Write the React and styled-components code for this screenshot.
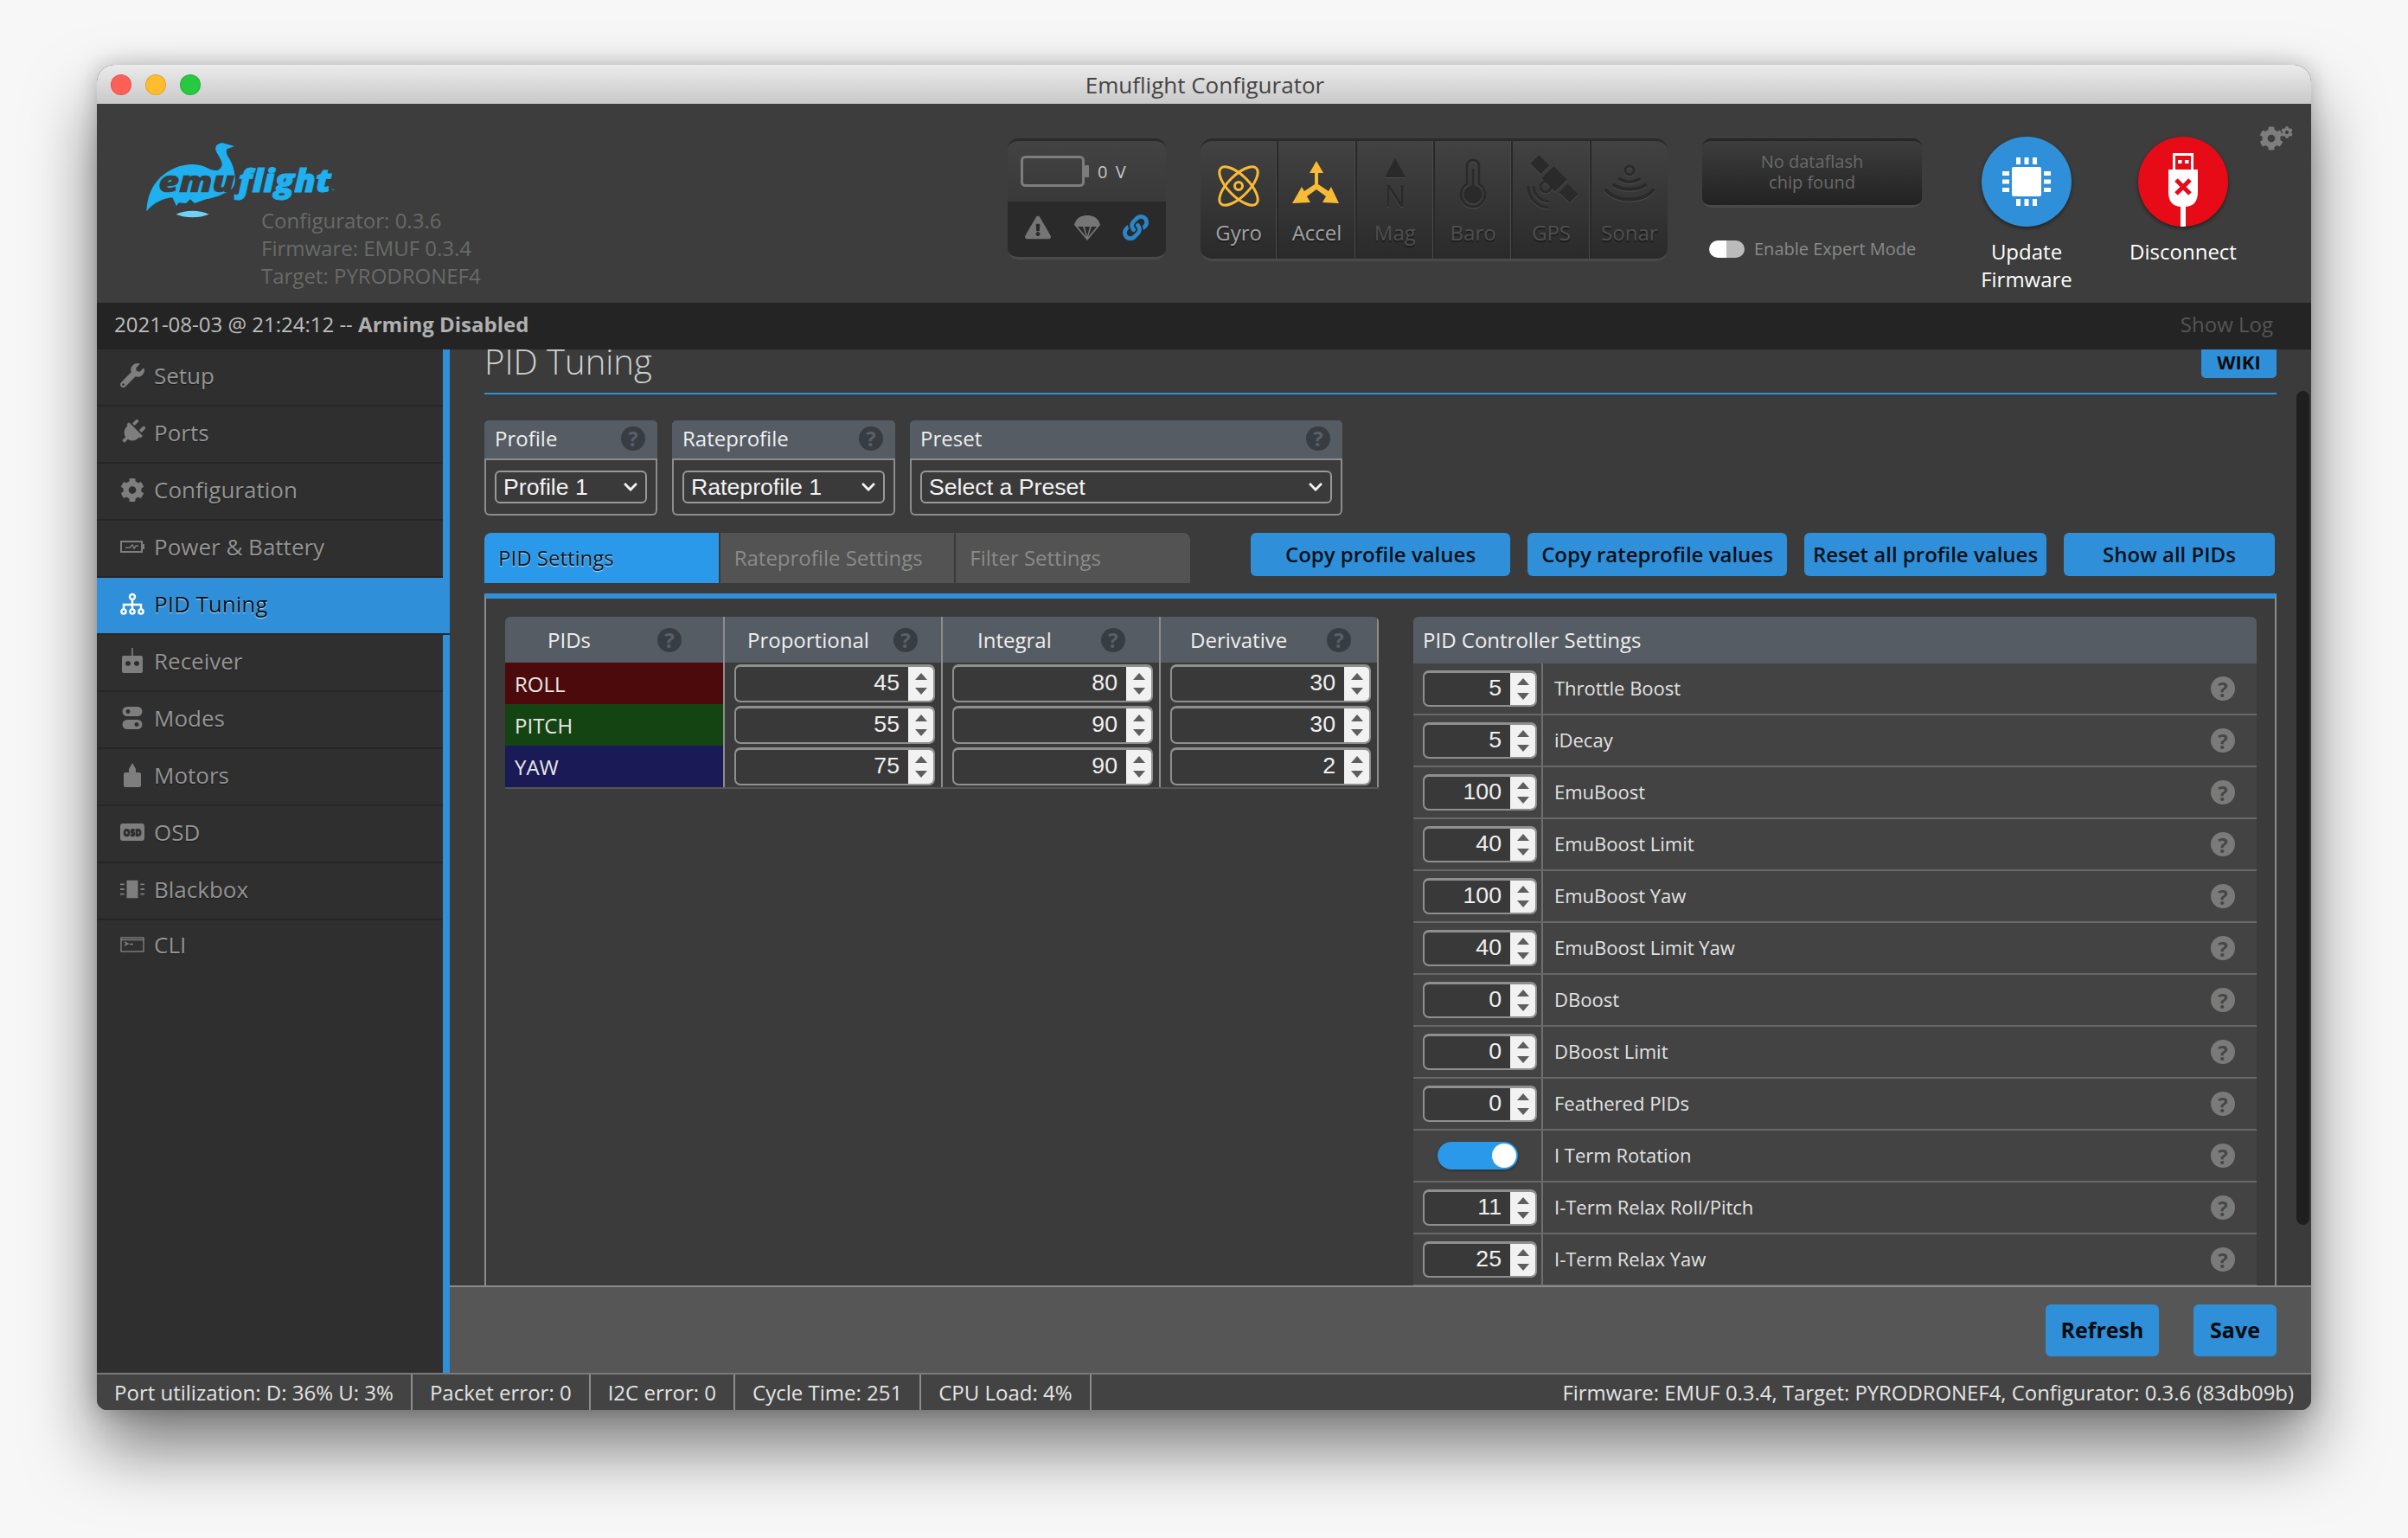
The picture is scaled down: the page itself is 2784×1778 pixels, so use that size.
import React from "react";
import styled, { createGlobalStyle } from "styled-components";
import { FaWrench, FaPlug, FaCog, FaLink, FaExclamationTriangle, FaChevronDown } from "react-icons/fa";

const GlobalStyle = createGlobalStyle`
  html, body {
    margin: 0;
    width: 2784px;
    height: 1778px;
    overflow: hidden;
    background: #f7f7f7;
    font-family: "Open Sans", sans-serif;
  }
  * { box-sizing: border-box; }
`;

const Page = styled.div`
  padding: 75px 112px 0;
`;

const Window = styled.div`
  width: 2560px;
  height: 1555px;
  display: flex;
  flex-direction: column;
  border-radius: 20px 20px 12px 12px;
  overflow: hidden;
  background: #3a3b3a;
  box-shadow: 0 44px 80px rgba(0, 0, 0, 0.5), 0 0 26px rgba(0, 0, 0, 0.22);
`;

const TitleBar = styled.div`
  height: 45px;
  flex: none;
  display: flex;
  align-items: center;
  padding-left: 16px;
  gap: 16px;
  background: linear-gradient(#ebebeb, #c9c9c9);
`;

const Light = styled.span`
  width: 24px;
  height: 24px;
  border-radius: 50%;
  background: ${(p) => p.$color};
  border: 1px solid rgba(0, 0, 0, 0.12);
`;

const Title = styled.div`
  flex: 1;
  text-align: center;
  padding-right: 134px;
  font-size: 26px;
  color: #454545;
`;

const Header = styled.header`
  height: 230px;
  flex: none;
  display: flex;
  align-items: flex-start;
  padding: 35px 0 0 48px;
  background: #3c3d3c;
`;

const Brand = styled.div`
  width: 1005px;
`;

const VersionList = styled.div`
  margin: -26px 0 0 142px;
  font-size: 24px;
  line-height: 32px;
  color: #696a69;
`;

const BatteryBox = styled.div`
  width: 183px;
  height: 140px;
  margin-top: 5px;
  border-radius: 12px;
  border-top: 3px solid #2a2a2a;
  border-bottom: 3px solid #4a4a4a;
  overflow: hidden;
  background: #2a2a2a;
`;

const BatteryTop = styled.div`
  height: 70px;
  display: flex;
  align-items: center;
  gap: 9px;
  padding-left: 15px;
  background: linear-gradient(#424342, #383938);
  font-size: 20px;
  letter-spacing: 2px;
  color: #c8c8c8;
`;

const BatteryBottom = styled.div`
  height: 64px;
  display: flex;
  align-items: center;
  justify-content: space-between;
  padding: 0 20px 4px 20px;
  color: #757575;
  font-size: 30px;
`;

const SensorBar = styled.div`
  display: flex;
  width: 540px;
  height: 142px;
  margin: 5px 0 0 40px;
  border-radius: 14px;
  border-top: 3px solid #2a2a2a;
  border-bottom: 3px solid #4a4a4a;
  overflow: hidden;
  background: linear-gradient(#414241, #2a2a2a);
`;

const SensorCell = styled.div`
  flex: 1;
  display: flex;
  flex-direction: column;
  align-items: center;
  padding-top: 20px;
  border-right: 2px solid #282828;
  box-shadow: inset -1px 0 0 #4a4a4a;
  &:last-child { border-right: 0; box-shadow: none; }
`;

const SensorIcon = styled.svg`
  width: 60px;
  height: 60px;
  flex: none;
  overflow: visible;
  color: ${(p) => (p.$on ? "#f9bb35" : "#2a2a2a")};
  filter: ${(p) => (p.$on ? "none" : "drop-shadow(0 1px 0 #4e4e4e)")};
`;

const SensorLabel = styled.div`
  margin-top: 10px;
  font-size: 24px;
  line-height: 32px;
  color: ${(p) => (p.$on ? "#a2a2a2" : "#4f4f4f")};
  text-shadow: 0 2px 1px #1c1c1c;
`;

const FlashColumn = styled.div`
  width: 254px;
  margin: 5px 0 0 40px;
`;

const FlashBox = styled.div`
  height: 80px;
  display: flex;
  align-items: center;
  justify-content: center;
  text-align: center;
  padding-bottom: 2px;
  border-radius: 10px;
  border-top: 3px solid #262626;
  border-bottom: 3px solid #4a4a4a;
  background: linear-gradient(#3c3d3c, #222);
  font-size: 20px;
  line-height: 24px;
  color: #6a6a6a;
`;

const ExpertRow = styled.div`
  display: flex;
  align-items: center;
  gap: 11px;
  margin: 34px 0 0 8px;
  font-size: 20px;
  white-space: nowrap;
  color: #8a8a8a;
`;

const ExpertSwitch = styled.span`
  width: 41px;
  height: 20px;
  display: block;
  border-radius: 10px;
  background: linear-gradient(90deg, #fff 0 20px, #bbb 20px);
`;

const ActionColumn = styled.div`
  width: 180px;
  margin: 3px 0 0 ${(p) => p.$gap}px;
  display: flex;
  flex-direction: column;
  align-items: center;
  text-align: center;
  font-size: 24px;
  line-height: 32px;
  color: #fff;
`;

const ActionCircle = styled.div`
  width: 104px;
  height: 104px;
  margin-bottom: 13px;
  border-radius: 50%;
  background: ${(p) => p.$color};
  box-shadow: 0 2px 4px rgba(0, 0, 0, 0.45);
  display: flex;
  align-items: center;
  justify-content: center;
  overflow: hidden;
  svg { display: block; }
`;

const SettingsGears = styled.div`
  display: flex;
  align-items: flex-start;
  margin: -9px 0 0 -2px;
  color: #7d7d7d;
`;

const SmallGear = styled(FaCog)`
  margin-left: -3px;
`;

const LogBar = styled.div`
  height: 54px;
  flex: none;
  display: flex;
  align-items: center;
  justify-content: space-between;
  padding: 0 44px 5px 20px;
  background: #242424;
  font-size: 24px;
  color: #bdbdbd;
  b { font-weight: 700; color: #b0b0b0; }
`;

const ShowLog = styled.span`
  color: #555;
`;

const Body = styled.div`
  flex: 1;
  min-height: 0;
  display: flex;
`;

const Sidebar = styled.nav`
  width: 408px;
  flex: none;
  border-right: 8px solid #2f90d9;
  background: #2f2f2f;
`;

const NavItem = styled.div`
  height: ${(p) => (p.$last ? "60px" : "66px")};
  margin-right: ${(p) => (p.$active ? "-8px" : "0")};
  display: flex;
  align-items: center;
  gap: 11px;
  padding: 0 0 ${(p) => (p.$last ? "2px" : "4px")} 27px;
  border-bottom: 2px solid ${(p) => (p.$active ? "#2a2a2a" : p.$last ? "transparent" : "#262626")};
  background: ${(p) => (p.$active ? "#2f90d9" : "transparent")};
  font-size: 26px;
  color: ${(p) => (p.$active ? "#0b1018" : "#949494")};
  text-shadow: ${(p) => (p.$active ? "0 1px 1px #bfe0f8" : "0 1px 1px #1a1a1a")};
`;

const NavIcon = styled.span`
  width: 28px;
  height: 28px;
  display: flex;
  align-items: center;
  justify-content: center;
  color: ${(p) => (p.$active ? "#fff" : "#7e7e7e")};
`;

const Main = styled.main`
  flex: 1;
  min-width: 0;
  display: flex;
  flex-direction: column;
  position: relative;
`;

const Scroller = styled.div`
  flex: 1;
  min-height: 0;
  overflow: hidden;
  padding: 0 40px;
`;

const ScrollThumb = styled.div`
  position: absolute;
  top: 48px;
  right: 2px;
  width: 15px;
  height: 964px;
  border-radius: 8px;
  background: #1f1f1f;
`;

const PageHead = styled.div`
  height: 52px;
  display: flex;
  justify-content: space-between;
  overflow: hidden;
  border-bottom: 2px solid #2f90d9;
`;

const PageTitle = styled.h1`
  margin: -17px 0 0;
  font-size: 40px;
  font-weight: 300;
  line-height: 62px;
  color: #d0d0d0;
`;

const WikiButton = styled.div`
  width: 87px;
  height: 33px;
  border-radius: 0 0 5px 5px;
  background: #2f90d9;
  text-align: center;
  font-size: 22px;
  font-weight: 700;
  line-height: 28px;
  color: #0a0a0a;
`;

const SelectRow = styled.div`
  display: flex;
  gap: 17px;
  margin-top: 30px;
`;

const SelectBox = styled.div`
  width: ${(p) => p.$width}px;
  height: 110px;
  border: 2px solid #8c8c8c;
  border-top: 0;
  border-radius: 6px;
`;

const SelectHead = styled.div`
  height: 46px;
  margin: 0 -2px;
  display: flex;
  align-items: center;
  justify-content: space-between;
  padding: 0 14px 3px 12px;
  border-bottom: 2px solid #8c8c8c;
  border-radius: 6px 6px 0 0;
  background: #555c64;
  font-size: 24px;
  color: #eee;
`;

const Help = styled.span`
  width: 28px;
  height: 28px;
  flex: none;
  display: flex;
  align-items: center;
  justify-content: center;
  border-radius: 50%;
  background: ${(p) => (p.$dark ? "#383d44" : "#7a7a7a")};
  font-size: 24px;
  font-weight: 700;
  color: ${(p) => (p.$dark ? "#59606a" : "#464746")};
`;

const SelectField = styled.div`
  height: 38px;
  margin: 12px 10px 0;
  display: flex;
  align-items: center;
  justify-content: space-between;
  padding: 0 8px 0 8px;
  border: 2px solid #999;
  border-radius: 6px;
  background: #3a3a3a;
  font-family: "Liberation Sans", Arial, sans-serif;
  font-size: 26.67px;
  color: #f2f2f2;
`;

const TabRow = styled.div`
  display: flex;
  align-items: flex-start;
  margin-top: 20px;
`;

const Tabs = styled.div`
  display: flex;
  gap: 2px;
  width: 816px;
  height: 58px;
  margin-right: 70px;
`;

const Tab = styled.div`
  flex: 1;
  display: flex;
  align-items: center;
  padding: 0 0 2px 16px;
  background: ${(p) => (p.$active ? "#2b99ea" : "#525352")};
  font-size: 24px;
  color: ${(p) => (p.$active ? "#10161d" : "#8a8b8a")};
  text-shadow: ${(p) => (p.$active ? "0 1px 1px #bfe0f8" : "none")};
  &:first-child { border-radius: 8px 0 0 0; }
  &:last-child { border-radius: 0 8px 0 0; }
`;

const ActionButtons = styled.div`
  flex: 1;
  display: flex;
  gap: 20px;
`;

const ActionButton = styled.div`
  width: ${(p) => p.$width}px;
  height: 50px;
  display: flex;
  align-items: center;
  justify-content: center;
  padding-bottom: 2px;
  border-radius: 6px;
  background: #2f90d9;
  font-size: 24px;
  font-weight: 600;
  white-space: nowrap;
  color: #071019;
`;

const Panel = styled.section`
  margin-top: 12px;
  display: flex;
  gap: 40px;
  padding: 21px 22px 0 22px;
  border-top: 6px solid #2f90d9;
  border-left: 2px solid #8c8c8c;
  border-right: 2px solid #8c8c8c;
`;

const PidGrid = styled.div`
  width: 1010px;
  flex: none;
  align-self: flex-start;
  display: grid;
  grid-template-columns: 254px 252px 252px 252px;
  grid-template-rows: 53px;
  grid-auto-rows: 48px;
  border-bottom: 2px solid #555;
  border-radius: 6px 6px 0 0;
  overflow: hidden;
`;

const PidHead = styled.div`
  display: flex;
  align-items: center;
  justify-content: space-between;
  padding: 0 ${(p) => p.$right}px 0 ${(p) => p.$left}px;
  border-right: 2px solid #8c8c8c;
  background: #555c64;
  font-size: 24px;
  color: #eee;
`;

const AxisCell = styled.div`
  display: flex;
  align-items: center;
  padding: 0 0 0 11px;
  border-right: 2px solid #8c8c8c;
  background: ${(p) => p.$color};
  font-size: 24px;
  color: #e8e8e8;
`;

const ValueCell = styled.div`
  padding: 2px 0 0 11px;
  border-right: 2px solid #8c8c8c;
`;

const FieldWrap = styled.div`
  width: ${(p) => p.$width}px;
  height: ${(p) => p.$height}px;
  display: flex;
  border: 2px solid #8f8f8f;
  border-top-width: 3px;
  border-radius: 7px;
  overflow: hidden;
  background: #393939;
  font-family: "Liberation Sans", Arial, sans-serif;
  font-size: 26.67px;
  color: #f0f0f0;
`;

const FieldValue = styled.div`
  flex: 1;
  display: flex;
  align-items: center;
  justify-content: flex-end;
  padding: 0 10px 3px 0;
`;

const Spin = styled.div`
  width: 29px;
  display: flex;
  flex-direction: column;
  align-items: center;
  justify-content: center;
  gap: 9px;
  background: #f2f2f2;
`;

const SpinArrow = styled.span`
  width: 0;
  height: 0;
  border-left: 7px solid transparent;
  border-right: 7px solid transparent;
  ${(p) => (p.$down ? "border-top: 8px solid #5e5e5e;" : "border-bottom: 8px solid #5e5e5e;")}
`;

const SettingsPanel = styled.div`
  width: 975px;
  flex: none;
`;

const SettingsHead = styled.div`
  height: 54px;
  display: flex;
  align-items: center;
  padding: 0 0 2px 11px;
  border-radius: 6px 6px 0 0;
  background: #555c64;
  font-size: 24px;
  color: #eee;
`;

const SettingRow = styled.div`
  height: 60px;
  display: grid;
  grid-template-columns: 150px 1fr 80px;
  align-items: stretch;
  border-bottom: 2px solid #686868;
  background: #424342;
  font-size: 22px;
  color: #e2e2e2;
`;

const SettingControl = styled.div`
  display: flex;
  align-items: center;
  justify-content: ${(p) => (p.$center ? "center" : "flex-start")};
  padding-left: ${(p) => (p.$center ? "0" : "11px")};
  border-right: 2px solid #707070;
`;

const SettingName = styled.div`
  display: flex;
  align-items: center;
  padding: 0 0 2px 13px;
`;

const SettingHelp = styled.div`
  display: flex;
  align-items: center;
  padding-left: 27px;
`;

const Toggle = styled.div`
  width: 93px;
  height: 32px;
  display: flex;
  justify-content: flex-end;
  padding: 2px 2px;
  border-radius: 16px;
  background: #2b99ea;
  box-shadow: 0 1px 3px rgba(0, 0, 0, 0.4);
`;

const ToggleKnob = styled.span`
  width: 28px;
  border-radius: 50%;
  background: #fff;
`;

const SaveBar = styled.div`
  height: 101px;
  flex: none;
  display: flex;
  align-items: center;
  justify-content: flex-end;
  gap: 40px;
  padding: 0 40px 0 0;
  border-top: 2px solid #8a8a8a;
  background: #555655;
`;

const SaveButton = styled.div`
  width: ${(p) => p.$width}px;
  height: 60px;
  display: flex;
  align-items: center;
  justify-content: center;
  padding-bottom: 2px;
  border-radius: 6px;
  background: #2f90d9;
  font-size: 25px;
  font-weight: 700;
  color: #050a10;
`;

const StatusBar = styled.footer`
  height: 43px;
  flex: none;
  display: flex;
  align-items: stretch;
  border-top: 2px solid #7a7a7a;
  background: #424342;
  font-size: 24px;
  color: #e4e4e4;
`;

const StatusItem = styled.div`
  display: flex;
  align-items: center;
  padding: 0 20px;
  border-right: 2px solid #8c8c8c;
  white-space: nowrap;
`;

const StatusVersion = styled.div`
  margin-left: auto;
  display: flex;
  align-items: center;
  padding-right: 20px;
  font-size: 23.9px;
  white-space: nowrap;
`;

const navIcons = {
  power: (
    <svg width="28" height="14" viewBox="0 0 28 14" fill="none" stroke="currentColor">
      <rect x="1" y="1" width="24" height="12" strokeWidth="2" />
      <rect x="25" y="4" width="3" height="6" fill="currentColor" stroke="none" />
      <path d="M6 8 L11 8 L14 5 L16 9 L18 6 L21 6" strokeWidth="1.5" />
    </svg>
  ),
  pid: (
    <svg width="28" height="26" viewBox="0 0 28 26" fill="none" stroke="currentColor" strokeWidth="2.4">
      <circle cx="14" cy="5" r="3" />
      <path d="M14 8 V20 M4 20 V14 H24 V20" />
      <circle cx="4" cy="22" r="2.6" />
      <circle cx="14" cy="22" r="2.6" />
      <circle cx="24" cy="22" r="2.6" />
    </svg>
  ),
  receiver: (
    <svg width="26" height="30" viewBox="0 0 26 30" fill="currentColor">
      <rect x="12.2" y="0" width="1.6" height="10" />
      <path d="M3 9 H23 Q25 9 25 11 V27 Q25 29 23 29 H3 Q1 29 1 27 V11 Q1 9 3 9 Z M8 15 a3 3 0 1 0 0.01 0 Z M18 15 a3 3 0 1 0 0.01 0 Z" fillRule="evenodd" />
    </svg>
  ),
  modes: (
    <svg width="24" height="28" viewBox="0 0 24 28" fill="currentColor" fillRule="evenodd">
      <path d="M6 1 H18 a5.500 5.500 0 0 1 0 11 H6 a5.500 5.500 0 0 1 0 -11 Z M7 4 a2.500 2.500 0 1 0 0.01 0 Z" />
      <path d="M6 16 H18 a5.500 5.500 0 0 1 0 11 H6 a5.500 5.500 0 0 1 0 -11 Z M17 19 a2.500 2.500 0 1 0 0.01 0 Z" />
    </svg>
  ),
  motors: (
    <svg width="20" height="28" viewBox="0 0 20 28" fill="currentColor">
      <path d="M10 0 L14 7 V11 H18 Q20 11 20 13 V26 Q20 28 18 28 H2 Q0 28 0 26 V13 Q0 11 2 11 H6 V7 Z" />
    </svg>
  ),
  osd: (
    <svg width="28" height="20" viewBox="0 0 28 20">
      <rect width="28" height="20" rx="3" fill="currentColor" />
      <text x="14" y="14" textAnchor="middle" fontFamily="Open Sans, sans-serif" fontWeight="800" fontSize="10" fill="#2f2f2f">OSD</text>
    </svg>
  ),
  blackbox: (
    <svg width="30" height="24" viewBox="0 0 30 24" fill="currentColor">
      <rect x="8" y="1" width="14" height="22" />
      <path d="M0 5 H5 V7 H0 Z M0 11 H5 V13 H0 Z M0 17 H5 V19 H0 Z M25 5 H30 V7 H25 Z M25 11 H30 V13 H25 Z M25 17 H30 V19 H25 Z" />
    </svg>
  ),
  cli: (
    <svg width="28" height="18" viewBox="0 0 28 18" fill="none" stroke="currentColor" strokeWidth="1.4">
      <rect x="1" y="1" width="26" height="16" />
      <path d="M1 3.500 H27 M5 6 L9 8 L5 10 M11 8.500 H15" />
    </svg>
  ),
};

const navItems = [
  { label: "Setup", icon: <FaWrench size={28} /> },
  { label: "Ports", icon: <FaPlug size={30} style={{ transform: "rotate(45deg)" }} /> },
  { label: "Configuration", icon: <FaCog size={29} /> },
  { label: "Power & Battery", icon: navIcons.power },
  { label: "PID Tuning", icon: navIcons.pid, active: true },
  { label: "Receiver", icon: navIcons.receiver },
  { label: "Modes", icon: navIcons.modes },
  { label: "Motors", icon: navIcons.motors },
  { label: "OSD", icon: navIcons.osd },
  { label: "Blackbox", icon: navIcons.blackbox },
  { label: "CLI", icon: navIcons.cli, last: true },
];

const pidHeads = [
  { label: "PIDs", left: 49, right: 48 },
  { label: "Proportional", left: 26, right: 27 },
  { label: "Integral", left: 40, right: 39 },
  { label: "Derivative", left: 34, right: 30 },
];

const pidRows = [
  { axis: "ROLL", color: "#4d0a0c", values: [45, 80, 30] },
  { axis: "PITCH", color: "#144412", values: [55, 90, 30] },
  { axis: "YAW", color: "#1a1a56", values: [75, 90, 2] },
];

const settings = [
  ["Throttle Boost", 5],
  ["iDecay", 5],
  ["EmuBoost", 100],
  ["EmuBoost Limit", 40],
  ["EmuBoost Yaw", 100],
  ["EmuBoost Limit Yaw", 40],
  ["DBoost", 0],
  ["DBoost Limit", 0],
  ["Feathered PIDs", 0],
  ["I Term Rotation", null],
  ["I-Term Relax Roll/Pitch", 11],
  ["I-Term Relax Yaw", 25],
];

function NumberField({ value, width, height }) {
  return (
    <FieldWrap $width={width} $height={height}>
      <FieldValue>{value}</FieldValue>
      <Spin>
        <SpinArrow />
        <SpinArrow $down />
      </Spin>
    </FieldWrap>
  );
}

function Logo() {
  return (
    <svg width="240" height="110" viewBox="0 0 720 330" style={{ display: "block" }}>
      <path
        fill="#1fb0f0"
        d="M28 268 C30 215 50 165 95 135 C140 105 195 95 240 118 C262 130 280 130 289 112 C295 95 275 75 268 55 C265 38 280 28 298 32 L333 42 L308 52 C303 60 305 70 315 85 C330 110 337 140 335 165 C332 190 315 200 300 205 C280 215 255 222 235 226 L195 240 L180 226 L165 240 L140 238 L132 250 L118 220 C90 222 55 235 28 268 Z"
      />
      <path fill="#6fd0f8" d="M130 278 C165 262 210 262 245 278 C210 292 165 292 130 278 Z" />
      <text x="70" y="202" textLength="264" lengthAdjust="spacingAndGlyphs" fontFamily="Open Sans, sans-serif" fontWeight="800" fontStyle="italic" fontSize="100" fill="#3b3c3b" stroke="#3b3c3b" strokeWidth="2">emu</text>
      <text x="346" y="200" textLength="324" lengthAdjust="spacingAndGlyphs" fontFamily="Open Sans, sans-serif" fontWeight="800" fontStyle="italic" fontSize="112" fill="#1fb0f0" stroke="#1fb0f0" strokeWidth="2.5">flight</text>
      <text x="670" y="200" fontFamily="Open Sans, sans-serif" fontSize="14" fill="#1fb0f0">™</text>
    </svg>
  );
}

const sensors = [
  {
    label: "Gyro",
    on: true,
    art: (
      <g fill="none" stroke="currentColor" strokeWidth="3">
        <ellipse cx="30" cy="32" rx="29" ry="12" transform="rotate(45 30 32)" />
        <ellipse cx="30" cy="32" rx="29" ry="12" transform="rotate(-45 30 32)" />
        <circle cx="30" cy="32" r="4.500" />
      </g>
    ),
  },
  {
    label: "Accel",
    on: true,
    art: (
      <g fill="currentColor">
        <path d="M30 3 L38 17 H32 V30 L44 38 L47 33 L56 52 L37 51 L41 44 L30 36 L19 44 L23 51 L2 52 L13 33 L16 38 L28 30 V17 H22 Z" />
      </g>
    ),
  },
  {
    label: "Mag",
    on: false,
    art: (
      <g fill="currentColor">
        <path d="M30 0 L42 22 H18 Z" />
        <text x="30" y="56" textAnchor="middle" fontFamily="Open Sans, sans-serif" fontSize="34">N</text>
      </g>
    ),
  },
  {
    label: "Baro",
    on: false,
    art: (
      <g fill="none" stroke="currentColor" strokeWidth="3">
        <path d="M23 30 V9 a7 7 0 0 1 14 0 V30 a14 14 0 1 1 -14 0 Z" />
        <circle cx="30" cy="42" r="9" fill="currentColor" />
        <path d="M30 12 V34" />
      </g>
    ),
  },
  {
    label: "GPS",
    on: false,
    art: (
      <g fill="currentColor">
        <g transform="rotate(45 34 24)">
          <rect x="23" y="14" width="22" height="20" />
          <rect x="2" y="17" width="17" height="14" />
          <rect x="49" y="17" width="17" height="14" />
        </g>
        <g fill="none" stroke="currentColor" strokeWidth="3">
          <circle cx="24" cy="33" r="6" />
          <path d="M10 32 a18 18 0 0 0 17 18 M4 32 a24 24 0 0 0 23 25" />
        </g>
      </g>
    ),
  },
  {
    label: "Sonar",
    on: false,
    art: (
      <g fill="none" stroke="currentColor" strokeWidth="4" strokeLinecap="round">
        <circle cx="30" cy="14" r="5" strokeWidth="3" />
        <path d="M19 24 a15 10 0 0 0 22 0 M12 31 a24 14 0 0 0 36 0 M3 37 a30 19 0 0 0 54 0" />
      </g>
    ),
  },
];

export default function App() {
  return (
    <>
      <GlobalStyle />
      <Page>
        <Window>
          <TitleBar>
            <Light $color="#ff5f57" />
            <Light $color="#febc2e" />
            <Light $color="#28c840" />
            <Title>Emuflight Configurator</Title>
          </TitleBar>

          <Header>
            <Brand>
              <Logo />
              <VersionList>
                <div>Configurator: 0.3.6</div>
                <div>Firmware: EMUF 0.3.4</div>
                <div>Target: PYRODRONEF4</div>
              </VersionList>
            </Brand>

            <BatteryBox>
              <BatteryTop>
                <svg width="80" height="36" viewBox="0 0 80 36" fill="none">
                  <rect x="1.500" y="1.500" width="71" height="33" rx="4" stroke="#7d7d7d" strokeWidth="3" />
                  <rect x="74" y="11" width="5" height="14" rx="1" fill="#7d7d7d" />
                </svg>
                0 V
              </BatteryTop>
              <BatteryBottom>
                <FaExclamationTriangle />
                <svg width="32" height="30" viewBox="0 0 32 30" fill="#767676">
                  <path d="M1 12 C3 4 9 1 16 1 C23 1 29 4 31 12 L16 30 Z M5 14 L15 26 L11 14 Z M21 14 L17 26 L27 14 Z M13 14 L16 25 L19 14 Z" fillRule="evenodd" />
                </svg>
                <FaLink color="#2a86c8" />
              </BatteryBottom>
            </BatteryBox>

            <SensorBar>
              {sensors.map((s) => (
                <SensorCell key={s.label}>
                  <SensorIcon $on={s.on} viewBox="0 0 60 60">{s.art}</SensorIcon>
                  <SensorLabel $on={s.on}>{s.label}</SensorLabel>
                </SensorCell>
              ))}
            </SensorBar>

            <FlashColumn>
              <FlashBox>No dataflash<br />chip found</FlashBox>
              <ExpertRow>
                <ExpertSwitch />
                Enable Expert Mode
              </ExpertRow>
            </FlashColumn>

            <ActionColumn $gap={31}>
              <ActionCircle $color="#2f90d9">
                <svg width="56" height="56" viewBox="0 0 56 56" fill="#fff">
                  <rect x="11" y="11" width="34" height="34" rx="2" />
                  <path d="M16 0 h5 v8 h-5z M25.500 0 h5 v8 h-5z M35 0 h5 v8 h-5z M16 48 h5 v8 h-5z M25.500 48 h5 v8 h-5z M35 48 h5 v8 h-5z M0 16 h8 v5 h-8z M0 25.500 h8 v5 h-8z M0 35 h8 v5 h-8z M48 16 h8 v5 h-8z M48 25.500 h8 v5 h-8z M48 35 h8 v5 h-8z" />
                </svg>
              </ActionCircle>
              <div>Update<br />Firmware</div>
            </ActionColumn>

            <ActionColumn $gap={1}>
              <ActionCircle $color="#e60b17">
                <svg width="36" height="104" viewBox="0 0 36 104">
                  <rect x="7.500" y="20.500" width="21" height="19" fill="none" stroke="#fff" strokeWidth="3" />
                  <rect x="12" y="27" width="4.500" height="4" fill="#fff" />
                  <rect x="20" y="27" width="4.500" height="4" fill="#fff" />
                  <path d="M1 38 H35 V64 Q35 80 21 81 V104 H15 V81 Q1 80 1 64 Z" fill="#fff" />
                  <path d="M10 50 L26 66 M26 50 L10 66" stroke="#e60b17" strokeWidth="5" />
                </svg>
              </ActionCircle>
              <div>Disconnect</div>
            </ActionColumn>

            <SettingsGears>
              <FaCog size={28} />
              <SmallGear size={14} />
            </SettingsGears>
          </Header>

          <LogBar>
            <span>2021-08-03 @ 21:24:12 -- <b>Arming Disabled</b></span>
            <ShowLog>Show Log</ShowLog>
          </LogBar>

          <Body>
            <Sidebar>
              {navItems.map((item) => (
                <NavItem key={item.label} $active={item.active} $last={item.last}>
                  <NavIcon $active={item.active}>{item.icon}</NavIcon>
                  {item.label}
                </NavItem>
              ))}
            </Sidebar>

            <Main>
              <Scroller>
                <PageHead>
                  <PageTitle>PID Tuning</PageTitle>
                  <WikiButton>WIKI</WikiButton>
                </PageHead>

                <SelectRow>
                  <SelectBox $width={200}>
                    <SelectHead>Profile <Help $dark>?</Help></SelectHead>
                    <SelectField>Profile 1 <FaChevronDown size={18} /></SelectField>
                  </SelectBox>
                  <SelectBox $width={258}>
                    <SelectHead>Rateprofile <Help $dark>?</Help></SelectHead>
                    <SelectField>Rateprofile 1 <FaChevronDown size={18} /></SelectField>
                  </SelectBox>
                  <SelectBox $width={500}>
                    <SelectHead>Preset <Help $dark>?</Help></SelectHead>
                    <SelectField>Select a Preset <FaChevronDown size={18} /></SelectField>
                  </SelectBox>
                </SelectRow>

                <TabRow>
                  <Tabs>
                    <Tab $active>PID Settings</Tab>
                    <Tab>Rateprofile Settings</Tab>
                    <Tab>Filter Settings</Tab>
                  </Tabs>
                  <ActionButtons>
                    <ActionButton $width={300}>Copy profile values</ActionButton>
                    <ActionButton $width={300}>Copy rateprofile values</ActionButton>
                    <ActionButton $width={280}>Reset all profile values</ActionButton>
                    <ActionButton $width={244}>Show all PIDs</ActionButton>
                  </ActionButtons>
                </TabRow>

                <Panel>
                  <PidGrid>
                    {pidHeads.map((h) => (
                      <PidHead key={h.label} $left={h.left} $right={h.right}>
                        {h.label} <Help $dark>?</Help>
                      </PidHead>
                    ))}
                    {pidRows.map((row) => (
                      <React.Fragment key={row.axis}>
                        <AxisCell $color={row.color}>{row.axis}</AxisCell>
                        {row.values.map((v, i) => (
                          <ValueCell key={i}>
                            <NumberField value={v} width={232} height={44} />
                          </ValueCell>
                        ))}
                      </React.Fragment>
                    ))}
                  </PidGrid>

                  <SettingsPanel>
                    <SettingsHead>PID Controller Settings</SettingsHead>
                    {settings.map(([name, value]) => (
                      <SettingRow key={name}>
                        <SettingControl $center={value === null}>
                          {value === null ? (
                            <Toggle><ToggleKnob /></Toggle>
                          ) : (
                            <NumberField value={value} width={132} height={42} />
                          )}
                        </SettingControl>
                        <SettingName>{name}</SettingName>
                        <SettingHelp><Help>?</Help></SettingHelp>
                      </SettingRow>
                    ))}
                  </SettingsPanel>
                </Panel>
              </Scroller>
              <ScrollThumb />

              <SaveBar>
                <SaveButton $width={131}>Refresh</SaveButton>
                <SaveButton $width={96}>Save</SaveButton>
              </SaveBar>
            </Main>
          </Body>

          <StatusBar>
            <StatusItem>Port utilization: D: 36% U: 3%</StatusItem>
            <StatusItem>Packet error: 0</StatusItem>
            <StatusItem>I2C error: 0</StatusItem>
            <StatusItem>Cycle Time: 251</StatusItem>
            <StatusItem>CPU Load: 4%</StatusItem>
            <StatusVersion>Firmware: EMUF 0.3.4, Target: PYRODRONEF4, Configurator: 0.3.6 (83db09b)</StatusVersion>
          </StatusBar>
        </Window>
      </Page>
    </>
  );
}
